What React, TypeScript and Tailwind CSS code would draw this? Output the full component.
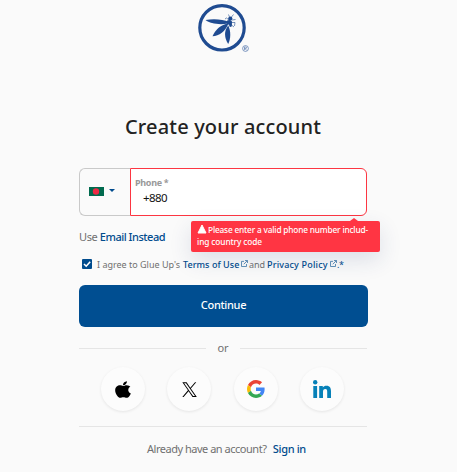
import { useState } from "react";

function WaspLogo() {
  return (
    <svg width="54" height="50" viewBox="0 0 54 50" className="block" aria-label="Glue Up">
      <circle cx="25" cy="24.800" r="22.2" fill="none" stroke="#1f4b91" strokeWidth="3.2" />
      <g fill="#1f4b91">
        <path d="M32 19C26 16.500 17 15.600 8.500 17.100C13 20.600 22 22.300 31 20.600Z" />
        <path d="M31.500 20.300C24 21.500 18 27 15.500 33.300C22 33 28.500 28.500 31.500 20.300Z" />
        <path d="M31.200 22.500C26.700 28 27.300 35 31.200 41C33.800 36 34.100 28 31.200 22.500Z" />
        <ellipse cx="32.300" cy="19.300" rx="2.700" ry="2.400" />
        <circle cx="33.300" cy="15.500" r="2.100" />
        <ellipse cx="33.500" cy="21.500" rx="1.500" ry="2.500" />
      </g>
      <path d="M32 17L29.500 15L28 16M32.500 14L31.500 11.500M34.500 14L36.500 11.500M35 17L38.500 16.500M34.500 19.500L38 19.500L37.500 23M34.500 22L37 24" fill="none" stroke="#1f4b91" strokeWidth=".6" />
      <circle cx="48.500" cy="45.500" r="2.900" fill="none" stroke="#4b6fa8" strokeWidth=".7" />
      <path d="M47.500 47V44H48.800Q49.800 44 49.500 45.200L47.700 45.600L49.600 47" fill="none" stroke="#4b6fa8" strokeWidth=".6" />
    </svg>
  );
}

function ExternalIcon() {
  return (
    <svg width="7" height="7" viewBox="0 0 7 7" fill="none" stroke="#3b73a5" strokeWidth=".8" className="absolute left-px top-[4px]">
      <path d="M3 1.400H.5V6.500H5.500V4M4 .5H6.500V3M6.300 .7L2.800 4.200" />
    </svg>
  );
}

function AppleIcon() {
  return (
    <svg width="16" height="19" viewBox="0 0 384 512" preserveAspectRatio="none">
      <path d="M318.700 268.700c-.2-36.700 16.400-64.400 50-84.800-18.800-26.900-47.200-41.700-84.700-44.600-35.500-2.800-74.300 20.700-88.500 20.700-15 0-49.400-19.700-76.400-19.700C63.300 141.200 4 184.800 4 273.500q0 39.300 14.400 81.200c12.800 36.700 59 126.700 107.200 125.200 25.200-.6 43-17.900 75.800-17.900 31.800 0 48.300 17.900 76.400 17.900 48.600-.7 90.400-82.500 102.600-119.300-65.200-30.700-61.700-90-61.700-91.900zm-56.600-164.200c27.300-32.400 24.800-61.900 24-72.500-24.100 1.400-52 16.400-67.900 34.900-17.500 19.800-27.800 44.300-25.600 71.900 26.100 2 49.900-11.400 69.500-34.300z" />
    </svg>
  );
}

function XIcon() {
  return (
    <svg width="15" height="15" viewBox="0 0 24 24">
      <path d="M14.200 10.200L22.800 .3h-2L13.300 9 7.400 .3H.5l9 13L.5 23.800h2.100l7.900-9.200 6.300 9.200h6.900zM11.400 13.400l-1-1.400L3.300 1.900h3.100l5.900 8.400.9 1.300 7.600 10.800h-3.100z" />
    </svg>
  );
}

function GoogleIcon() {
  return (
    <svg width="18" height="18" viewBox="0 0 48 48">
      <path fill="#EA4335" d="M24 9.500c3.540 0 6.710 1.220 9.210 3.600l6.850-6.850C35.900 2.380 30.470 0 24 0 14.620 0 6.510 5.380 2.560 13.220l7.980 6.190C12.430 13.720 17.740 9.500 24 9.500z" />
      <path fill="#4285F4" d="M46.980 24.550c0-1.570-.15-3.090-.38-4.550H24v9.020h12.940c-.58 2.960-2.260 5.480-4.780 7.180l7.730 6c4.510-4.180 7.090-10.360 7.090-17.650z" />
      <path fill="#FBBC05" d="M10.530 28.590c-.48-1.450-.76-2.990-.76-4.590s.27-3.140.76-4.590l-7.980-6.190C.92 16.460 0 20.120 0 24c0 3.880.92 7.540 2.560 10.780l7.970-6.190z" />
      <path fill="#34A853" d="M24 48c6.480 0 11.930-2.130 15.890-5.810l-7.730-6c-2.150 1.450-4.920 2.300-8.160 2.300-6.260 0-11.570-4.220-13.470-9.910l-7.980 6.190C6.510 42.620 14.620 48 24 48z" />
    </svg>
  );
}

function LinkedInIcon() {
  return (
    <svg width="18" height="18" viewBox="0 0 18 18" fill="#0781b8">
      <circle cx="2.200" cy="2.200" r="2.200" />
      <path d="M.3 6H4.100V18H.3zM6.200 6H9.800V7.600C10.500 6.300 11.800 5.700 13.500 5.700C17 5.700 18 8 18 11.300V18H14.200V12C14.200 10.100 14 8.900 12.300 8.900C10.600 8.900 10 10.100 10 12V18H6.200z" />
    </svg>
  );
}

const providers = [
  { name: "Apple", Icon: AppleIcon },
  { name: "X", Icon: XIcon },
  { name: "Google", Icon: GoogleIcon },
  { name: "LinkedIn", Icon: LinkedInIcon },
];

export default function App() {
  const [phone, setPhone] = useState("+880");
  return (
    <main className="flex h-[472px] w-[457px] flex-col overflow-hidden bg-[#fafafa] pl-[79px] font-['Noto_Sans',sans-serif] text-[#707070]">
      <div className="h-[113px] pl-[118px] pt-[3px]"><WaspLogo /></div>
      <h1 className="h-[55px] w-[289px] whitespace-nowrap pl-[46px] text-[20px] font-medium leading-[27px] tracking-[0.160px] text-[#222]">Create your account</h1>

      <div className="relative h-12 w-[288px]">
        <div className="flex h-12">
          <button className="flex w-[51px] items-center rounded-l-[6px] border border-r-0 border-[#c9c9c9] pl-[9px]" aria-label="Country: Bangladesh">
            <svg width="15" height="9" className="-mt-px"><rect width="15" height="9" fill="#006a4e" /><circle cx="7" cy="4.500" r="3.200" fill="#ed2944" /></svg>
            <svg width="6" height="3" className="-mt-[3px] ml-[5px]"><path d="M0 0H6L3 3Z" fill="#004b8d" /></svg>
          </button>
          <label className="flex w-[237px] flex-col rounded-r-[6px] border border-[#fc3642] bg-white pl-1 pt-[8px]">
            <span className="whitespace-nowrap text-[9px] font-bold leading-3 tracking-[-0.300px] text-[#999]">Phone *</span>
            <input value={phone} onChange={(e) => setPhone(e.target.value)} className="ml-2 h-[17px] w-[180px] bg-transparent text-[11.500px] leading-[17px] tracking-[-0.550px] text-[#111] outline-none" />
          </label>
        </div>
        <div role="alert" className="absolute left-[112px] top-[53px] h-[31px] w-[189px] rounded-[2px] bg-[#ff3543] pl-[6px] pt-[3px] text-[8.300px] font-medium leading-[12px] text-white shadow-[0_8px_22px_rgba(35,55,110,0.14)]">
          <svg width="8" height="3" className="absolute left-[159px] top-[-3px]"><path d="M0 3L4 0L8 3Z" fill="#ff3543" /></svg>
          <div className="flex whitespace-nowrap"><svg width="10" height="10"><path d="M1 9L5 1L9 9Z" fill="white" stroke="white" strokeLinejoin="round" /></svg><span className="ml-px tracking-[-0.180px]">Please enter a valid phone number includ-</span></div>
          <div className="whitespace-nowrap tracking-[-0.100px]">ing country code</div>
        </div>
      </div>

      <p className="mt-[12px] h-[17px] whitespace-nowrap text-[11px] leading-[17px] tracking-[-0.400px]">Use <a className="font-medium tracking-[-0.470px] text-[#004b8d]">Email Instead</a></p>
      <div className="mt-[11px] flex h-[29px] items-start whitespace-nowrap text-[9px] leading-[17px]">
        <span role="checkbox" aria-checked="true" className="ml-[3px] mr-[5px] mt-[3px] block size-[10px] rounded-[1px] bg-[#004b8d]"><svg viewBox="0 0 10 10"><path d="M2 5L4.200 7.200L8.200 2.700" stroke="white" strokeWidth="1.600" fill="none" /></svg></span>
        <span className="w-[86px]">I agree to Glue Up's</span>
        <a className="w-[57px] font-medium tracking-[0.040px] text-[#004b8d]">Terms of Use</a>
        <span className="relative w-[9px]"><ExternalIcon /></span>
        <span className="w-[18px]">and</span>
        <a className="w-[62px] font-medium tracking-[0.180px] text-[#004b8d]">Privacy Policy</a>
        <span className="relative w-[8px]"><ExternalIcon /></span>
        <span className="tracking-[-0.500px] text-[#004b8d]">.*</span>
      </div>

      <button className="h-[42px] w-[289px] shrink-0 rounded-[6px] bg-[#004e91] pb-[2px] text-[11px] font-medium tracking-[-0.320px] text-white">Continue</button>
      <div className="mt-[11px] flex h-5 w-[288px] items-center text-[11px] leading-5">
        <i className="h-px w-[127px] bg-[#e5e5e5]" />
        <span className="w-[34px] text-center tracking-[-0.200px]">or</span>
        <i className="h-px flex-1 bg-[#e5e5e5]" />
      </div>
      <div className="mt-[9px] flex h-[60px] w-[288px] items-start gap-[22.300px] border-b border-[#e5e5e5] pl-[22px]">
        {providers.map(({ name, Icon }) => (
          <button key={name} aria-label={name} className="flex size-11 items-center justify-center rounded-full bg-[#fcfcfc] shadow-[0_1px_3px_rgba(0,0,0,0.085)]"><Icon /></button>
        ))}
      </div>
      <p className="mt-[13px] whitespace-nowrap pl-[68px] text-[11px] leading-[18px] tracking-[-0.480px]">Already have an account? <a className="ml-[4px] font-medium tracking-[-0.350px] text-[#004b8d]">Sign in</a></p>
    </main>
  );
}
